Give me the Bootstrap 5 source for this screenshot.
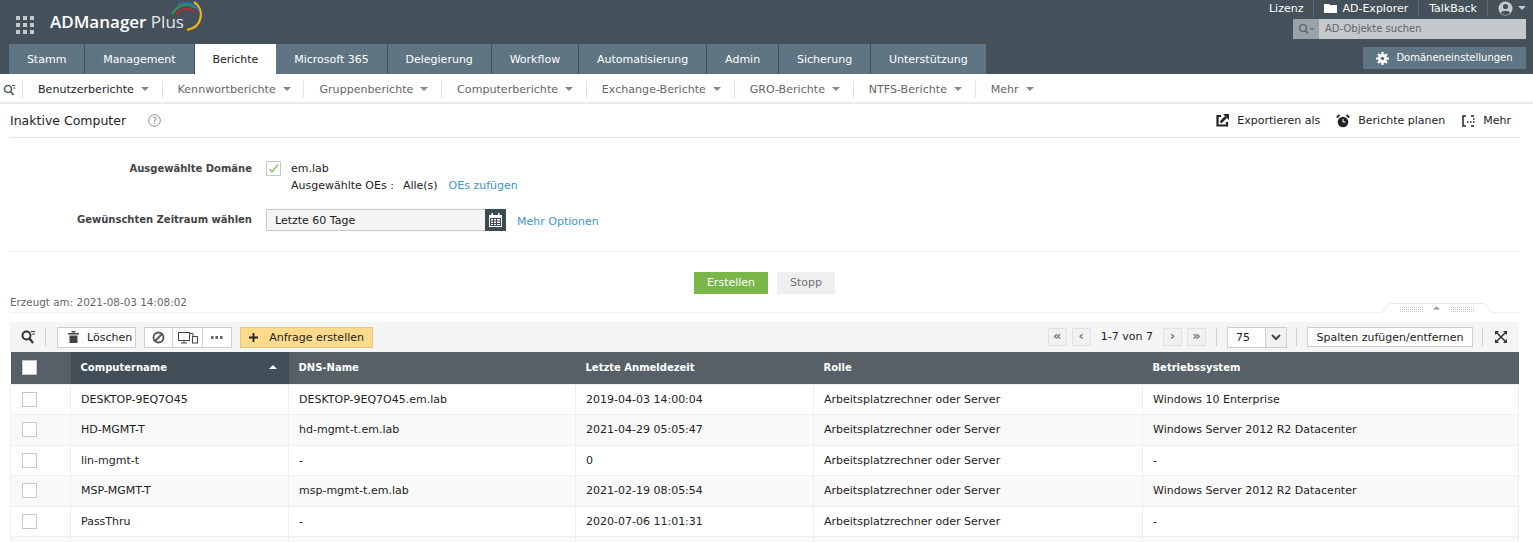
<!DOCTYPE html>
<html lang="de"><head><meta charset="utf-8"><title>ADManager Plus</title>
<link rel="stylesheet" href="https://cdn.jsdelivr.net/npm/bootstrap@5.3.0/dist/css/bootstrap.min.css">
<style>
html,body{height:542px;overflow:hidden}
body{font-family:"DejaVu Sans",Verdana,sans-serif;font-size:11px;color:#222;background:#fff;line-height:1.2}
a{text-decoration:none}
.top-bar{height:74px;background:#44515a}
.brand-row{padding:4px 0 0 16px;height:44px}
.brand-name{font-family:"Open Sans","DejaVu Sans",sans-serif;font-size:17px;color:#fff;font-weight:600;margin-left:15px;margin-top:8px;position:relative;height:24px}
.brand-name span{font-weight:400;color:#e4e7e9}
.grid-ico{margin-top:12px}
.logo-arc{position:absolute;left:118px;top:-12px}
.tab-row{margin-left:9px;height:30px}
.tab-item{background:#607583;color:#fff;padding:0 17.9px;height:30px;line-height:32px;border-right:1px solid #44515a;font-size:11px}
.tab-item.on{background:#fff;color:#222;border-right:0}
.top-links{color:#fff;font-size:11px;height:16px;padding-right:7px}
.top-links>div{padding:0 10px;border-right:1px solid #5c6973;height:16px;line-height:15px;display:flex;align-items:center;gap:5px}
.top-links>div:last-child{border:0;padding-right:0}
.search-box{width:233px;height:20px;background:#c4c9cc;margin:3px 7px 0 0;align-self:flex-end;color:#5f666b;font-size:10px;line-height:20px}
.search-ico{width:26px;background:#9aa3a9;height:20px}
.search-txt{padding-left:6px}
.dom-btn{width:163px;height:22px;background:#607583;color:#fff;font-size:10px;margin:8px 7px 0 0;align-self:flex-end;gap:7px}
.sub-nav{height:30px;border-bottom:2px solid #e9e9e9;color:#666;padding-top:3px}
.sub-nav .sub-it{padding:0 12.7px 0 15px;border-left:1px solid #e3e3e3;height:17px;line-height:17px;font-size:11.1px;white-space:nowrap}
.car{display:inline-block;border:4px solid transparent;border-top:4px solid #888;border-bottom:0;margin-left:7px;vertical-align:2px}
.head-row{height:34px;margin:0 14px 0 10px;border-bottom:1px solid #e6e6e6}
.head-row h1{font-size:12.5px;margin:0;font-weight:400;color:#1d1d1d}
.act{font-size:11px;color:#222;gap:8px}
.form-zone{margin:0 14px 0 10px;height:114px;border-bottom:1px solid #eee;padding-top:24px}
.lab{width:242px;text-align:right;font-weight:700;color:#444;font-size:10px}
.chk{width:15px;height:15px;border:1px solid #c8c8c8;background:#fff;flex:none}
.date-inp{width:219px;height:22px;border:1px solid #c9c9c9;border-right:0;background:#f5f5f5;padding-left:8px;line-height:21px;font-size:11px}
.cal-btn{width:21px;height:22px;background:#3c4a54}
.linkish{color:#3d95c8}
.go-row{height:44px;padding:20px 4px 0 0;gap:9px}
.go-btn{height:22px;line-height:22px;padding:0 13px;font-size:11px;background:#7ab648;color:#fff}
.stop-btn{background:#efefef;color:#6f6f6f;padding:0 13px}
.gen-row{margin:0 14px 9px 10px;height:17px;border-bottom:1px solid #eee;color:#666;font-size:10.4px;position:relative}
.handle{position:absolute;right:27px;top:7px;width:110px;height:10px;background:#fff}
.tool-row{margin:0 14px 0 10px;height:30px;background:#f5f5f5;padding:0 12px 0 11px}
.tb{background:#fff;border:1px solid #cfcfcf;height:21px;color:#222;font-size:11px;line-height:19px}
.sep{width:1px;height:18px;background:#d2d2d2}
.q-btn{background:#fedb8c;border:1px solid #e8c676;height:21px;padding:0 8px;line-height:19px;font-size:11px}
.pg{width:19px;height:18px;background:#f1f1f1;border:1px solid #e1e1e1;color:#777;text-align:center;line-height:14px;font-size:13px;font-weight:700}
.data-wrap{margin:0 14px 0 10px}
.data-tab{width:1509px;table-layout:fixed;margin:0;border-collapse:collapse;font-size:11px}
.data-tab th{background:#566066;color:#fff;height:32px;font-weight:700;padding:0 0 0 10px;font-size:10px;vertical-align:middle;border:0}
.data-tab th.sorted{background:#414e57;position:relative}
.data-tab td{height:30.5px;padding:0 0 0 10px;border:1px solid #efefef;vertical-align:middle;color:#222;background:#fff}
.data-tab tr:nth-child(even) td{background:#f9f9f9}
.data-tab th.ck-cell,.data-tab td.ck-cell{padding-left:11px}
.sort-up{position:absolute;right:12px;top:13px;border:4px solid transparent;border-bottom:4px solid #fff;border-top:0}
.box-w{width:15px;height:15px;background:#fff;border:1px solid #c8c8c8;display:block}
</style></head><body>
<div class="top-bar d-flex justify-content-between">
 <div class="d-flex flex-column flex-grow-1">
  <div class="brand-row d-flex">
   <svg class="grid-ico" width="19" height="19" viewBox="0 0 19 19" fill="#c4cacd"><rect x="0" y="0" width="4" height="4"/><rect x="7" y="0" width="4" height="4"/><rect x="14" y="0" width="4" height="4"/><rect x="0" y="7" width="4" height="4"/><rect x="7" y="7" width="4" height="4"/><rect x="14" y="7" width="4" height="4"/><rect x="0" y="14" width="4" height="4"/><rect x="7" y="14" width="4" height="4"/><rect x="14" y="14" width="4" height="4"/></svg>
   <div class="brand-name">ADManager <span>Plus</span>
    <svg class="logo-arc" width="36" height="36" viewBox="0 0 36 36" fill="none"><path d="M4 14C9 5 20 2 27 8" stroke="#2f9a4a" stroke-width="2"/><path d="M10 5C18 1 27 3 31 11" stroke="#2c6db5" stroke-width="2"/><path d="M8 15C13 8 21 7 26 12" stroke="#b22a3c" stroke-width="2"/><path d="M26 2C37 9 35 27 19 30" stroke="#f2b416" stroke-width="2.2"/></svg>
   </div>
  </div>
  <div class="tab-row d-flex">
   <div class="tab-item">Stamm</div><div class="tab-item">Management</div><div class="tab-item on">Berichte</div><div class="tab-item">Microsoft 365</div><div class="tab-item">Delegierung</div><div class="tab-item">Workflow</div><div class="tab-item">Automatisierung</div><div class="tab-item">Admin</div><div class="tab-item">Sicherung</div><div class="tab-item">Unterstützung</div>
  </div>
 </div>
 <div class="d-flex flex-column" style="flex:none">
  <div class="top-links d-flex justify-content-end align-items-center">
   <div>Lizenz</div>
   <div><svg width="13" height="11" viewBox="0 0 13 11" fill="#fff"><path d="M0 1h5l1 1h7v8H0z"/></svg>AD-Explorer</div>
   <div>TalkBack</div>
   <div><svg width="15" height="15" viewBox="0 0 15 15"><circle cx="7.5" cy="7.5" r="7" fill="#c4cacd"/><circle cx="7.5" cy="5.5" r="2.6" fill="#44515a"/><path d="M2.8 12c1-3 8.400-3 9.400 0a6.500 6.500 0 0 1-9.400 0z" fill="#44515a"/></svg><span class="car" style="margin-left:0;border-top-color:#c4cacd"></span></div>
  </div>
  <div class="search-box d-flex">
   <div class="search-ico d-flex align-items-center justify-content-center"><svg width="18" height="12" viewBox="0 0 18 12" fill="none"><circle cx="6" cy="5" r="3.500" stroke="#616a70" stroke-width="1.600"/><path d="M8.500 7.500L11 10.500" stroke="#616a70" stroke-width="1.800"/><path d="M13 5h4l-2 2.500z" fill="#616a70"/></svg></div>
   <div class="search-txt">AD-Objekte suchen</div>
  </div>
  <div class="dom-btn d-flex align-items-center justify-content-center">
   <svg width="13" height="13" viewBox="0 0 13 13" fill="#fff"><circle cx="6.500" cy="6.500" r="4.500"/><g stroke="#fff" stroke-width="2.200"><path d="M6.500 0v13M0 6.500h13M2 2l9 9M11 2l-9 9"/></g><circle cx="6.500" cy="6.500" r="1.800" fill="#607583"/></svg>
   Domäneneinstellungen</div>
 </div>
</div>
<div class="sub-nav d-flex align-items-center">
 <svg style="margin:0 6px 0 3px" width="13" height="12" viewBox="0 0 13 12" fill="none"><circle cx="5" cy="5" r="3.500" stroke="#55606a" stroke-width="1.700"/><path d="M7.500 7.500L10.500 11" stroke="#55606a" stroke-width="1.800"/><path d="M9 1.500h3.500M10 4h2.500" stroke="#55606a"/></svg>
 <div class="sub-it" style="color:#222">Benutzerberichte<span class="car"></span></div>
 <div class="sub-it">Kennwortberichte<span class="car"></span></div>
 <div class="sub-it">Gruppenberichte<span class="car"></span></div>
 <div class="sub-it">Computerberichte<span class="car"></span></div>
 <div class="sub-it">Exchange-Berichte<span class="car"></span></div>
 <div class="sub-it">GRO-Berichte<span class="car"></span></div>
 <div class="sub-it">NTFS-Berichte<span class="car"></span></div>
 <div class="sub-it">Mehr<span class="car"></span></div>
</div>
<div class="head-row d-flex align-items-center justify-content-between">
 <div class="d-flex align-items-center" style="gap:22px"><h1>Inaktive Computer</h1>
  <svg width="13" height="13" viewBox="0 0 13 13"><circle cx="6.500" cy="6.500" r="5.800" fill="none" stroke="#8b8b8b"/><text x="6.500" y="9.500" font-size="8.500" text-anchor="middle" fill="#777" font-family="DejaVu Sans">?</text></svg></div>
 <div class="d-flex align-items-center" style="gap:17px;padding-right:8px">
  <div class="act d-flex align-items-center" style="margin-right:-1px"><svg width="13" height="13" viewBox="0 0 13 13" fill="none"><path d="M5 2H1.500v9.500H11V8" stroke="#222" stroke-width="2.200"/><path d="M4.500 8.500L10 3" stroke="#222" stroke-width="2.500"/><path d="M7 0h6v6z" fill="#222"/></svg>Exportieren als</div>
  <div class="act d-flex align-items-center"><svg width="14" height="14" viewBox="0 0 14 14"><circle cx="7" cy="8" r="5.300" fill="#222"/><path d="M0.800 3.500L3.500 1M13.200 3.500L10.500 1" stroke="#222" stroke-width="1.800"/><path d="M7 5v3h2.500" stroke="#fff" fill="none"/></svg>Berichte planen</div>
  <div class="act d-flex align-items-center"><svg width="13" height="12" viewBox="0 0 13 12" fill="none"><path d="M4 1H1v10h3M9 1h3M9 11h3" stroke="#222" stroke-width="1.500"/><path d="M5 7h1.500M8 7h1.500M11 7h1.500M11 4h1.500" stroke="#222" stroke-width="1.500"/></svg>Mehr</div>
 </div>
</div>
<div class="form-zone">
 <div class="d-flex">
  <div class="lab" style="padding-top:1px">Ausgewählte Domäne</div>
  <div class="chk" style="margin:-1px 10px 0 14px"><svg class="d-block" width="13" height="13" viewBox="0 0 13 13" fill="none"><path d="M2.500 7l2.500 3L11 2.500" stroke="#84bd5b" stroke-width="1.300"/></svg></div>
  <div><div>em.lab</div>
   <div class="d-flex" style="margin-top:4px"><span>Ausgewählte OEs :</span><span style="margin-left:9px">Alle(s)</span><span class="linkish" style="margin-left:11px">OEs zufügen</span></div></div>
 </div>
 <div class="d-flex align-items-center" style="margin-top:17px">
  <div class="lab">Gewünschten Zeitraum wählen</div>
  <div class="date-inp" style="margin-left:14px">Letzte 60 Tage</div>
  <div class="cal-btn d-flex align-items-center justify-content-center"><svg width="13" height="14" viewBox="0 0 13 14" fill="#fff"><path d="M0 2h2.500V0h1.500v2h5V0h1.500v2H13v12H0zM1 5v8h11V5z"/><g fill="#fff"><rect x="2" y="6" width="2" height="1.500"/><rect x="5" y="6" width="2" height="1.500"/><rect x="8" y="6" width="3" height="1.500"/><rect x="2" y="8.500" width="2" height="1.500"/><rect x="5" y="8.500" width="2" height="1.500"/><rect x="8" y="8.500" width="3" height="1.500"/><rect x="2" y="11" width="2" height="1"/><rect x="5" y="11" width="2" height="1"/><rect x="8" y="11" width="3" height="1"/></g></svg></div>
  <a class="linkish" style="margin:2px 0 0 11px">Mehr Optionen</a>
 </div>
</div>
<div class="go-row d-flex justify-content-center"><div class="go-btn">Erstellen</div><div class="go-btn stop-btn">Stopp</div></div>
<div class="gen-row">Erzeugt am: 2021-08-03 14:08:02
 <div class="handle"><svg class="d-block" width="110" height="10" viewBox="0 0 110 10" fill="none"><path d="M0 9L8 .5H102L110 9" stroke="#e6e6e6"/><path d="M51 6.500h7l-3.500-3z" fill="#8c979d"/><path d="M18 4.500h23M18 6.500h23M18 8.500h23M69 4.500h23M69 6.500h23M69 8.500h23" stroke="#c8c8c8" stroke-dasharray="1 1"/></svg></div>
</div>
<div class="tool-row d-flex align-items-center justify-content-between">
 <div class="d-flex align-items-center">
  <svg width="14" height="14" viewBox="0 0 14 14" fill="none"><circle cx="5.500" cy="5.500" r="4" stroke="#333" stroke-width="2"/><path d="M8.500 8.500L12 13" stroke="#333" stroke-width="2.200"/><path d="M10 1.500h4M11 4h3" stroke="#333"/></svg>
  <div class="sep" style="margin:0 11px 0 10px"></div>
  <div class="tb d-flex align-items-center" style="padding:0 3px 0 10px;gap:8px"><svg width="11" height="12" viewBox="0 0 11 12" fill="#444"><path d="M0 2h11v1.500H0zM3.500 0h4v1.500h-4zM1.500 4.500h8V12h-8z"/></svg>Löschen</div>
  <div class="tb d-flex" style="margin-left:8px">
   <div class="d-flex align-items-center justify-content-center" style="width:28px;border-right:1px solid #cfcfcf"><svg width="13" height="13" viewBox="0 0 13 13" fill="none"><circle cx="6.500" cy="6.500" r="5" stroke="#555" stroke-width="1.800"/><path d="M3 10L10 3" stroke="#555" stroke-width="1.800"/></svg></div>
   <div class="d-flex align-items-center justify-content-center" style="width:30px;border-right:1px solid #cfcfcf"><svg width="20" height="13" viewBox="0 0 20 13" fill="none" stroke="#444"><rect x=".5" y="1.500" width="11" height="8"/><path d="M3 12h6M6 10v2"/><rect x="14.500" y="5.500" width="5" height="6.500"/><path d="M15 5V2.500h-3"/></svg></div>
   <div class="d-flex align-items-center justify-content-center" style="width:28px"><svg width="12" height="3" viewBox="0 0 12 3" fill="#666"><rect width="2.500" height="3"/><rect x="4.500" width="2.500" height="3"/><rect x="9" width="2.500" height="3"/></svg></div>
  </div>
  <div class="q-btn d-flex align-items-center" style="margin-left:8px;gap:11px"><svg width="9" height="9" viewBox="0 0 9 9" fill="#222"><path d="M3.600 0h1.800v3.600H9v1.800H5.400V9H3.600V5.400H0V3.600h3.600z"/></svg>Anfrage erstellen</div>
 </div>
 <div class="d-flex align-items-center">
  <div class="pg">«</div><div class="pg" style="margin-left:5px">‹</div><div style="margin:0 10px">1-7 von 7</div><div class="pg">›</div><div class="pg" style="margin-left:5px">»</div>
  <div class="sep" style="margin:0 10px"></div>
  <div class="tb d-flex" style="width:60px;height:21px"><div class="flex-grow-1 ps-2">75</div><div class="d-flex align-items-center justify-content-center" style="width:21px;background:#f1f1f1;border-left:1px solid #cfcfcf"><svg width="10" height="7" viewBox="0 0 10 7" fill="none"><path d="M1 1l4 4 4-4" stroke="#444" stroke-width="2"/></svg></div></div>
  <div class="sep" style="margin:0 10px 0 9px"></div>
  <div class="tb" style="padding:0 8.500px;height:20px">Spalten zufügen/entfernen</div>
  <div class="sep" style="margin:0 12px 0 9px"></div>
  <svg width="12" height="12" viewBox="0 0 12 12" fill="none" stroke="#333" stroke-width="1.500"><path d="M1 1l10 10M11 1L1 11"/><path d="M0 0h4L0 4zM12 0H8l4 4zM0 12h4l-4-4zM12 12H8l4-4z" fill="#333" stroke="none"/></svg>
 </div>
</div>
<div class="data-wrap">
<table class="table data-tab">
 <colgroup><col style="width:60px"><col style="width:218px"><col style="width:287px"><col style="width:238px"><col style="width:329px"><col></colgroup>
 <thead><tr><th class="ck-cell"><span class="box-w"></span></th><th class="sorted">Computername<span class="sort-up"></span></th><th>DNS-Name</th><th>Letzte Anmeldezeit</th><th>Rolle</th><th>Betriebssystem</th></tr></thead>
 <tbody>
 <tr><td class="ck-cell"><span class="box-w"></span></td><td>DESKTOP-9EQ7O45</td><td>DESKTOP-9EQ7O45.em.lab</td><td>2019-04-03 14:00:04</td><td>Arbeitsplatzrechner oder Server</td><td>Windows 10 Enterprise</td></tr>
 <tr><td class="ck-cell"><span class="box-w"></span></td><td>HD-MGMT-T</td><td>hd-mgmt-t.em.lab</td><td>2021-04-29 05:05:47</td><td>Arbeitsplatzrechner oder Server</td><td>Windows Server 2012 R2 Datacenter</td></tr>
 <tr><td class="ck-cell"><span class="box-w"></span></td><td>lin-mgmt-t</td><td>-</td><td>0</td><td>Arbeitsplatzrechner oder Server</td><td>-</td></tr>
 <tr><td class="ck-cell"><span class="box-w"></span></td><td>MSP-MGMT-T</td><td>msp-mgmt-t.em.lab</td><td>2021-02-19 08:05:54</td><td>Arbeitsplatzrechner oder Server</td><td>Windows Server 2012 R2 Datacenter</td></tr>
 <tr><td class="ck-cell"><span class="box-w"></span></td><td>PassThru</td><td>-</td><td>2020-07-06 11:01:31</td><td>Arbeitsplatzrechner oder Server</td><td>-</td></tr>
 <tr><td class="ck-cell"><span class="box-w"></span></td><td></td><td></td><td></td><td></td><td></td></tr>
 </tbody>
</table>
</div>
<script src="https://cdn.jsdelivr.net/npm/bootstrap@5.3.0/dist/js/bootstrap.bundle.min.js"></script>
</body></html>
